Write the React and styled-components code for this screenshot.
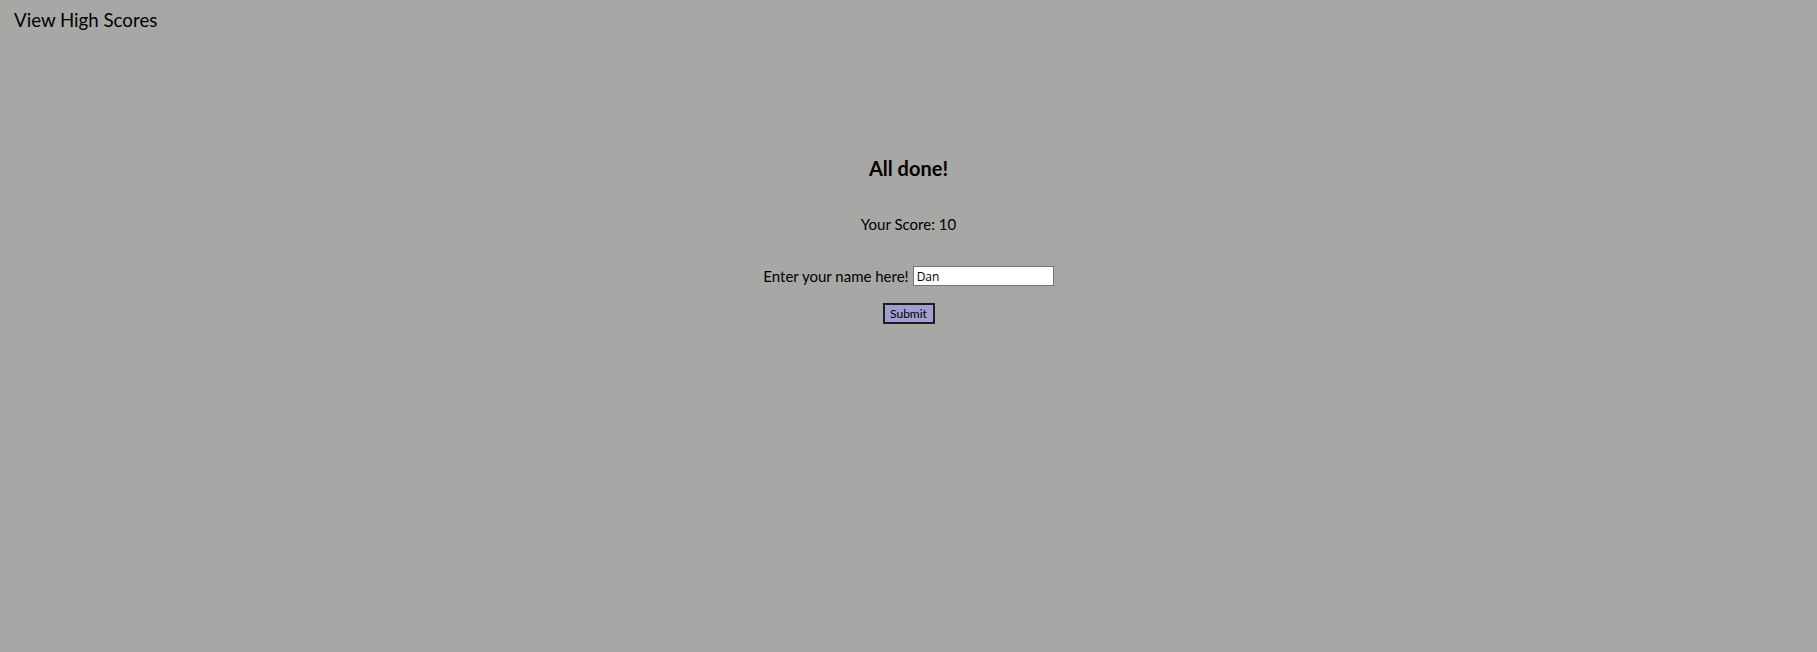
import React from "react";
import styled, { createGlobalStyle } from "styled-components";

const Global = createGlobalStyle`
  html, body { margin: 0; padding: 0; background: #a7a7a5; }
  body { font-family: Lato, "Open Sans", sans-serif; color: #000; }
`;

const Page = styled.div`
  min-height: 652px;
  display: flex;
  flex-direction: column;
`;

const Header = styled.header`
  padding: 9px 14px 0;
`;

const HighScores = styled.a`
  font-size: 18.7px;
  color: #000;
  text-decoration: none;
  cursor: pointer;
`;

const Main = styled.main`
  display: flex;
  flex-direction: column;
  align-items: center;
  padding-top: 125px;
`;

const Title = styled.h2`
  margin: 0;
  font-size: 20px;
  font-weight: 700;
`;

const Score = styled.p`
  margin: 35px 0 0;
  font-size: 15px;
`;

const Form = styled.form`
  display: flex;
  flex-direction: column;
  align-items: center;
  margin-top: 33px;
  gap: 17px;
`;

const Row = styled.label`
  display: flex;
  align-items: center;
  gap: 4px;
  font-size: 15px;
`;

const NameInput = styled.input`
  box-sizing: border-box;
  width: 141px;
  height: 20px;
  border: 1px solid #767676;
  background: #fff;
  padding: 1px 3px;
  font-family: "Open Sans", sans-serif;
  font-size: 12px;
  outline: none;
`;

const SubmitButton = styled.button`
  box-sizing: border-box;
  width: 52px;
  height: 21px;
  padding: 0;
  background: #a09fd0;
  border: 2px solid #1e1e1e;
  font-family: Lato, sans-serif;
  font-size: 12px;
  color: #000;
`;

export default function App() {
  return (
    <>
      <Global />
      <Page>
        <Header>
          <HighScores>View High Scores</HighScores>
        </Header>
        <Main>
          <Title>All done!</Title>
          <Score>Your Score: 10</Score>
          <Form onSubmit={(e) => e.preventDefault()}>
            <Row>
              Enter your name here!
              <NameInput defaultValue="Dan" />
            </Row>
            <SubmitButton type="submit">Submit</SubmitButton>
          </Form>
        </Main>
      </Page>
    </>
  );
}
